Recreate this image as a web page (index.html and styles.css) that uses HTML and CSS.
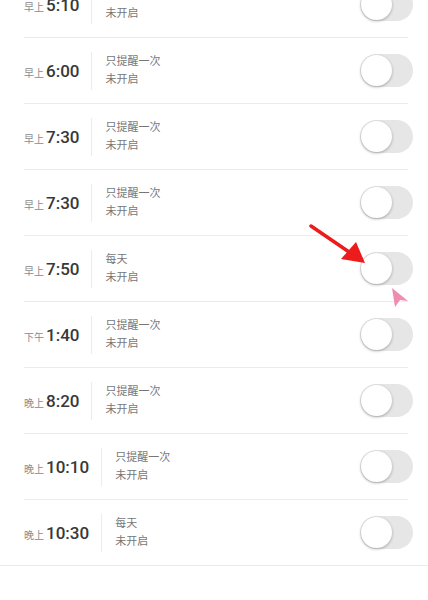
FILE: index.html
```html
<!DOCTYPE html>
<html lang="zh-CN">
<head>
    <meta charset="UTF-8">
    <meta name="viewport" content="width=device-width, initial-scale=1.0">
    <title>闹钟</title>
    <link rel="stylesheet" href="styles.css">
</head>
<body>
    <div class="alarm-list">
        <div class="alarm">
            <div class="time"><span class="period">早上</span>5:10</div>
            <div class="info"><p>只提醒一次</p><p>未开启</p></div>
            <span class="switch"></span>
        </div>
        <div class="alarm">
            <div class="time"><span class="period">早上</span>6:00</div>
            <div class="info"><p>只提醒一次</p><p>未开启</p></div>
            <span class="switch"></span>
        </div>
        <div class="alarm">
            <div class="time"><span class="period">早上</span>7:30</div>
            <div class="info"><p>只提醒一次</p><p>未开启</p></div>
            <span class="switch"></span>
        </div>
        <div class="alarm">
            <div class="time"><span class="period">早上</span>7:30</div>
            <div class="info"><p>只提醒一次</p><p>未开启</p></div>
            <span class="switch"></span>
        </div>
        <div class="alarm">
            <div class="time"><span class="period">早上</span>7:50</div>
            <div class="info"><p>每天</p><p>未开启</p></div>
            <span class="switch"></span>
        </div>
        <div class="alarm">
            <div class="time"><span class="period">下午</span>1:40</div>
            <div class="info"><p>只提醒一次</p><p>未开启</p></div>
            <span class="switch"></span>
        </div>
        <div class="alarm">
            <div class="time"><span class="period">晚上</span>8:20</div>
            <div class="info"><p>只提醒一次</p><p>未开启</p></div>
            <span class="switch"></span>
        </div>
        <div class="alarm">
            <div class="time"><span class="period">晚上</span>10:10</div>
            <div class="info"><p>只提醒一次</p><p>未开启</p></div>
            <span class="switch"></span>
        </div>
        <div class="alarm">
            <div class="time"><span class="period">晚上</span>10:30</div>
            <div class="info"><p>每天</p><p>未开启</p></div>
            <span class="switch"></span>
        </div>
    </div>

    <!-- annotation overlay -->
    <svg class="marks" width="428" height="600" viewBox="0 0 428 600">
        <line x1="311" y1="226" x2="352" y2="254" stroke="#ec1c1c" stroke-width="3.5" stroke-linecap="round"/>
        <polygon points="365,263 341,259 356,242" fill="#ec1c1c"/>
        <polygon points="392,288 408,301 400,300 395,307" fill="#f08bb4"/>
    </svg>
</body>
</html>
```

FILE: styles.css
```css
body {
    margin: 0;
    background-color: #fff;
    font-family: Roboto, "Noto Sans CJK SC", sans-serif;
    overflow: hidden;
}

.alarm-list {
    margin-top: -28px;
    border-bottom: 1px solid #ececec;
}

.alarm {
    display: flex;
    align-items: center;
    height: 65px;
    margin: 0 20px 0 24px;
    border-bottom: 1px solid #ececec;
}

.alarm:last-child {
    border-bottom: none;
}

.time {
    display: flex;
    align-items: baseline;
    color: #383838;
    font-size: 17px;
    font-weight: 500;
    padding-right: 12px;
}

.period {
    font-size: 10px;
    font-weight: normal;
    color: #8a8a8a;
    margin-right: 2px;
}

.info {
    border-left: 1px solid #ececec;
    padding-left: 13px;
    height: 38px;
    display: flex;
    flex-direction: column;
    justify-content: center;
}

.info p {
    margin: 0;
    font-size: 11px;
    line-height: 18px;
    color: #777;
}

.switch {
    position: relative;
    margin-left: auto;
    margin-right: -5px;
    width: 53px;
    height: 33px;
    border-radius: 17px;
    background-color: #e6e6e6;
}

.switch::after {
    content: "";
    position: absolute;
    left: 1px;
    top: 1px;
    width: 31px;
    height: 31px;
    border-radius: 50%;
    background-color: #fff;
    box-shadow: 0 1px 3px rgba(0, 0, 0, 0.3);
}

.marks {
    position: absolute;
    top: 0;
    left: 0;
    pointer-events: none;
}
```
